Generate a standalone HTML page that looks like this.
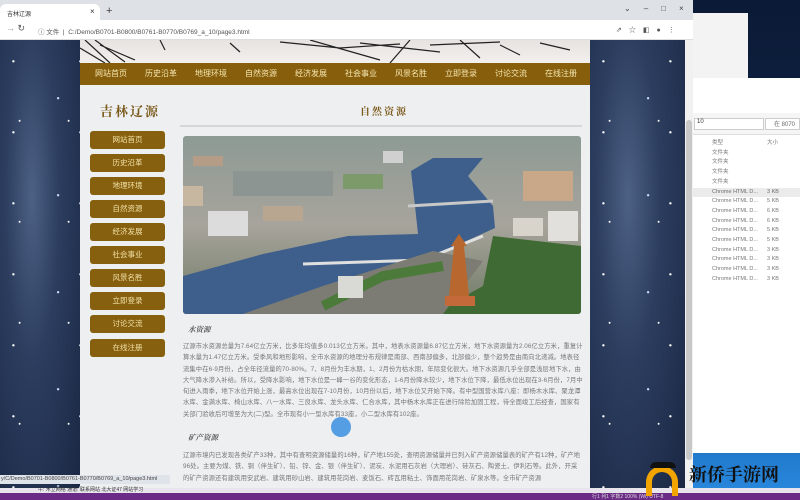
<!DOCTYPE html>
<html><head><meta charset="utf-8"><style>
*{margin:0;padding:0;box-sizing:border-box}
body{width:800px;height:500px;overflow:hidden;position:relative;background:#0d1a33;font-family:"Liberation Sans","Noto Sans CJK SC",sans-serif}
.abs{position:absolute}
.stars{background:radial-gradient(circle at 20% 30%,#fff 0 0.8px,transparent 1.5px),radial-gradient(circle at 70% 60%,#cfe0ff 0 0.8px,transparent 1.5px),radial-gradient(circle at 40% 80%,#fff 0 0.6px,transparent 1.3px),radial-gradient(ellipse at 40% 35%,#4d6185 0,#2c3d5e 40%,#1a2744 100%);background-size:67px 71px,83px 97px,49px 101px,100% 100%}
.nav span{display:inline-block;width:50px;text-align:center;color:#f5e6b0;font-size:8px;line-height:22px}
.btn{position:absolute;left:90px;width:75px;height:18px;background:#86600e;border-radius:3px;color:#f3e2a8;font-size:7.5px;text-align:center;line-height:18px}
.p{position:absolute;left:183px;width:400px;font-size:6.3px;line-height:11.3px;color:#777;letter-spacing:0.1px}
.h{position:absolute;font-family:"Noto Serif CJK SC",serif;font-weight:bold;color:#7a5a1a}
</style></head><body>
<div class="abs" style="left:693px;top:0;width:107px;height:500px;background:linear-gradient(#0b1a36,#0e2547 40%,#1a6fc0 85%,#2b8be0)"></div>
<div class="abs" style="left:693px;top:13px;width:55px;height:65px;background:#f3f3f3"></div>
<div class="abs" style="left:693px;top:78px;width:107px;height:375px;background:#fff"></div>
<div class="abs" style="left:693px;top:113px;width:107px;height:22px;background:#f5f5f5;border-bottom:1px solid #ddd"></div>
<div class="abs" style="left:694px;top:118px;width:70px;height:12px;border:1px solid #ccc;background:#fff;font-size:6px;color:#333;padding-left:2px">10</div>
<div class="abs" style="left:765px;top:118px;width:35px;height:12px;border:1px solid #ccc;background:#fff;font-size:6px;color:#666;padding-left:8px">在 8070</div>
<div class="abs" style="left:712px;top:139px;font-size:5.5px;line-height:9.7px;color:#777">类型<br>文件夹<br>文件夹<br>文件夹<br>文件夹<br>Chrome HTML D...<br>Chrome HTML D...<br>Chrome HTML D...<br>Chrome HTML D...<br>Chrome HTML D...<br>Chrome HTML D...<br>Chrome HTML D...<br>Chrome HTML D...<br>Chrome HTML D...<br>Chrome HTML D...</div>
<div class="abs" style="left:767px;top:139px;font-size:5.5px;line-height:9.7px;color:#777">大小<br><br><br><br><br>3 KB<br>5 KB<br>6 KB<br>6 KB<br>5 KB<br>5 KB<br>3 KB<br>3 KB<br>3 KB<br>3 KB</div>
<div class="abs" style="left:693px;top:188px;width:107px;height:9px;background:rgba(0,0,0,.08)"></div>
<div class="abs" style="left:0;top:0;width:693px;height:20px;background:#dee1e6"></div>
<div class="abs" style="left:0;top:4px;width:100px;height:16px;background:#fff;border-radius:6px 6px 0 0;font-size:6px;color:#333;padding:5px 0 0 7px">吉林辽源<span style="position:absolute;left:90px;top:3px;font-size:8px">×</span></div>
<div class="abs" style="left:106px;top:5px;font-size:11px;color:#444">+</div>
<div class="abs" style="left:624px;top:4px;font-size:8px;color:#444;letter-spacing:13px">⌄–□×</div>
<div class="abs" style="left:0;top:20px;width:693px;height:20px;background:#fff;border-bottom:1px solid #ddd"></div>
<div class="abs" style="left:6px;top:23px;font-size:9px;color:#999">→ <span style="color:#555">↻</span></div>
<div class="abs" style="left:38px;top:26px;font-size:6.5px;color:#555">ⓘ 文件 &nbsp;| &nbsp;C:/Demo/B0701-B0800/B0761-B0770/B0769_a_10/page3.html</div>
<div class="abs" style="left:616px;top:25px;font-size:7px;color:#555;letter-spacing:7px">⇗☆◧●⋮</div>
<div class="abs stars" style="left:0;top:40px;width:80px;height:450px"></div>
<div class="abs stars" style="left:590px;top:40px;width:95px;height:450px"></div>
<div class="abs" style="left:685px;top:40px;width:8px;height:450px;background:#f1f1f1"></div>
<div class="abs" style="left:686px;top:120px;width:6px;height:340px;background:#c8c8c8;border-radius:3px"></div>
<div class="abs" style="left:80px;top:40px;width:510px;height:23px;background:linear-gradient(#e6e3e0,#f2efec);overflow:hidden">
<svg width="510" height="23"><g stroke="#222" stroke-width="1.2" fill="none"><path d="M5 0 L30 23 M15 0 L45 22 M0 8 L25 23 M20 5 L55 20"/><path d="M200 2 L260 8 L320 4 M230 0 L300 20 M280 3 L360 12 M330 0 L310 23 M350 5 L420 2 M380 0 L400 18"/><path d="M80 0 L85 10 M150 3 L160 12 M420 5 L440 15 M460 3 L490 10"/></g></svg></div>
<div class="abs nav" style="left:80px;top:63px;width:510px;height:22px;background:#875f0c;padding-left:6px"><span>网站首页</span><span>历史沿革</span><span>地理环境</span><span>自然资源</span><span>经济发展</span><span>社会事业</span><span>风景名胜</span><span>立即登录</span><span>讨论交流</span><span>在线注册</span></div>
<div class="abs" style="left:80px;top:85px;width:510px;height:405px;background:#eeeff1"></div>
<div class="h" style="left:100px;top:101px;font-size:13px;letter-spacing:2px">吉林辽源</div>
<div class="h" style="left:360px;top:103px;font-size:10px;letter-spacing:2px">自然资源</div>
<div class="abs" style="left:180px;top:125px;width:402px;height:2px;background:#d6d6d6"></div>
<div class="btn" style="top:131px">网站首页</div><div class="btn" style="top:154px">历史沿革</div><div class="btn" style="top:177px">地理环境</div><div class="btn" style="top:200px">自然资源</div><div class="btn" style="top:223px">经济发展</div><div class="btn" style="top:246px">社会事业</div><div class="btn" style="top:269px">风景名胜</div><div class="btn" style="top:292px">立即登录</div><div class="btn" style="top:315px">讨论交流</div><div class="btn" style="top:339px">在线注册</div>
<svg class="abs" style="left:183px;top:136px;border-radius:3px" width="398" height="178">
<defs><linearGradient id="c" x1="0" y1="0" x2="0" y2="1"><stop offset="0" stop-color="#8d9a94"/><stop offset=".5" stop-color="#a7a49c"/><stop offset="1" stop-color="#6f7a64"/></linearGradient></defs>
<rect width="398" height="178" fill="url(#c)"/>
<rect x="50" y="35" width="100" height="25" fill="#8c9592"/><rect x="160" y="38" width="40" height="15" fill="#7d9a6a"/>
<rect x="25" y="75" width="40" height="25" fill="#dcdcdc"/><rect x="365" y="75" width="30" height="30" fill="#e2e0dc"/><rect x="330" y="82" width="30" height="18" fill="#d8d4cc"/>
<rect x="0" y="50" width="20" height="20" fill="#c8b7a0"/><rect x="340" y="35" width="50" height="30" fill="#c9a88a"/>
<rect x="10" y="20" width="30" height="10" fill="#b59c86"/><rect x="80" y="70" width="40" height="15" fill="#b8a690"/><rect x="200" y="15" width="20" height="12" fill="#d0d0d0"/>
<path d="M0 140 L80 118 L165 100 L235 98 L232 70 L228 35 L250 22 L300 22 L285 40 L310 70 L312 92 L290 102 L255 118 L200 132 L140 150 L80 178 L0 178Z" fill="#3e5f8c"/>
<path d="M120 128 L240 124 L300 100" stroke="#e0e0e0" stroke-width="3" fill="none"/>
<path d="M225 70 L310 65" stroke="#c8c8c8" stroke-width="3"/>
<path d="M310 100 L398 110 L398 178 L250 178 L300 150Z" fill="#3f6a33"/>
<path d="M60 178 L140 150 L250 115 L300 125 L260 178Z" fill="#7d7c74"/>
<path d="M140 170 L200 140 L260 130" stroke="#4b7a3a" stroke-width="10" fill="none"/>
<rect x="155" y="140" width="25" height="22" fill="#d9d9d6"/>
<path d="M268 110 L276 98 L284 110 L281 110 L286 160 L266 160 L271 110Z" fill="#b8682e"/>
<rect x="262" y="160" width="30" height="10" fill="#c46a3a"/>
</svg>
<div class="h" style="left:188px;top:324px;font-size:7.5px;color:#555;font-style:italic">水资源</div>
<div class="p" style="top:341px">辽源市水资源总量为7.64亿立方米，比多年均值多0.013亿立方米。其中，地表水资源量6.87亿立方米，地下水资源量为2.06亿立方米，重复计算水量为1.47亿立方米。受季风和地形影响，全市水资源的地理分布规律是南部、西南部偏多，北部偏少，整个趋势是由南向北递减。地表径流集中在6-9月份，占全年径流量的70-80%。7、8月份为丰水期，1、2月份为枯水期，年际变化很大。地下水资源几乎全部是浅层地下水，由大气降水渗入补给。所以，受降水影响，地下水位是一峰一谷的变化形态，1-6月份降水较少，地下水位下降，最低水位出现在3-6月份，7月中旬进入雨季，地下水位开始上涨，最高水位出现在7-10月份，10月份以后，地下水位又开始下降。有中型国营水库八座：即杨木水库、聚龙潭水库、金满水库、椅山水库、八一水库、三良水库、龙头水库、仁合水库，其中杨木水库正在进行除险加固工程，待全面竣工后经查，国家有关部门验收后可增至为大(二)型。全市现有小一型水库有33座，小二型水库有102座。</div>
<div class="abs" style="left:331px;top:417px;width:20px;height:20px;border-radius:50%;background:#3b8fe0;opacity:.85"></div>
<div class="h" style="left:188px;top:432px;font-size:7.5px;color:#555;font-style:italic">矿产资源</div>
<div class="p" style="top:450px">辽源市境内已发现各类矿产33种，其中有查明资源储量的16种，矿产地155处，查明资源储量并已列入矿产资源储量表的矿产有12种，矿产地96处。主要为煤、铁、铜（伴生矿）、铅、锌、金、银（伴生矿）、泥炭、水泥用石灰岩（大理岩）、硅灰石、陶瓷土、伊利石等。此外，开采的矿产资源还有建筑用安武岩、建筑用砂山岩、建筑用花岗岩、麦饭石、砖瓦用粘土、饰面用花岗岩、矿泉水等。全市矿产资源</div>
<div class="abs" style="left:0;top:475px;width:170px;height:9px;background:#dfe3ea;font-size:5.5px;color:#444;padding-left:1px;line-height:9px">y/C/Demo/B0701-B0800/B0761-B0770/B0769_a_10/page3.html</div>
<div class="abs" style="left:0;top:488px;width:800px;height:5px;background:#e8e4ec;font-size:5px;color:#333;padding-left:38px;line-height:5px">午: 木立网络 通道: 联系网站 北大证47 网站学习</div>
<div class="abs" style="left:0;top:493px;width:800px;height:7px;background:#6b2a86;font-size:5px;color:#ddd;padding-left:592px">行1 列1 字数2 100% (Wi) UTF-8</div>
<div class="abs" style="left:646px;top:466px;width:32px;height:30px;border:6px solid #f2a500;border-bottom:none;border-radius:16px 16px 0 0"></div>
<div class="abs" style="left:650px;top:462px;width:26px;height:6px;background:#111;border-radius:8px 8px 0 0"></div>
<div class="abs" style="left:689px;top:461px;font-size:18px;font-weight:bold;color:#111;font-family:'Noto Serif CJK SC',serif">新侨手游网</div>
</body></html>
